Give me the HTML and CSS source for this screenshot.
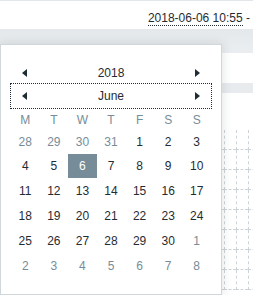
FILE: index.html
```html
<!DOCTYPE html>
<html lang="en">
<head>
  <meta charset="UTF-8" />
  <meta name="viewport" content="width=device-width, initial-scale=1.0" />
  <title>Time filter</title>
  <link rel="stylesheet" href="styles.css">
</head>
<body>
  <div class="header">
    <span class="period"><span class="date-link">2018-06-06 10:55</span> -</span>
  </div>
  <div class="toolbar"></div>
  <div class="filter"></div>
  <div class="table-head"></div>
  <div class="spacer"></div>
  <div class="graph">
    <div class="graph-grid" id="graphGrid"></div>
  </div>

  <div class="calendar">
    <div class="cal-row cal-year">
      <span class="arrow"><svg width="5" height="8" viewBox="0 0 5 8"><polygon points="5,0 5,8 0,4" /></svg></span>
      <span class="cal-title">2018</span>
      <span class="arrow"><svg width="5" height="8" viewBox="0 0 5 8"><polygon points="0,0 0,8 5,4" /></svg></span>
    </div>
    <div class="cal-row cal-month">
      <span class="arrow"><svg width="5" height="8" viewBox="0 0 5 8"><polygon points="5,0 5,8 0,4" /></svg></span>
      <span class="cal-title">June</span>
      <span class="arrow"><svg width="5" height="8" viewBox="0 0 5 8"><polygon points="0,0 0,8 5,4" /></svg></span>
    </div>
    <div class="cal-weekdays">
      <span>M</span><span>T</span><span>W</span><span>T</span><span>F</span><span>S</span><span>S</span>
    </div>
    <div class="cal-days" id="calDays"></div>
  </div>

  <script>
    const days = document.getElementById('calDays');
    const cells = [];
    [28, 29, 30, 31].forEach(d => cells.push({ d: d, muted: true }));
    for (let d = 1; d <= 30; d++) cells.push({ d: d, muted: false });
    for (let d = 1; d <= 8; d++) cells.push({ d: d, muted: true });

    cells.forEach(c => {
      const cell = document.createElement('span');
      cell.className = 'day';
      if (c.muted) cell.classList.add('muted');
      if (!c.muted && c.d === 6) cell.classList.add('selected');
      cell.innerText = c.d;
      days.appendChild(cell);
    });

    const grid = document.getElementById('graphGrid');
    for (let i = 0; i < 8 * 4; i++) {
      grid.appendChild(document.createElement('div'));
    }
  </script>
</body>
</html>
```

FILE: styles.css
```css
body {
  font-family: 'Liberation Sans', Arial, sans-serif;
  font-size: 12px;
  line-height: 14px;
  color: #1f2c33;
  background: #ffffff;
  margin: 0;
  padding: 0;
  overflow: hidden;
  position: relative;
  height: 295px;
}
.header {
  height: 28px;
  border-top: 1px solid #e2e6e8;
  display: flex;
  justify-content: flex-end;
  padding-right: 3px;
}
.period {
  margin-top: 10px;
  white-space: nowrap;
}
.date-link {
  border-bottom: 1px dotted #1f2c33;
}
.toolbar {
  height: 24px;
  background: linear-gradient(to bottom, #e4e8ea, #ebeef0);
}
.filter {
  height: 30px;
}
.table-head {
  height: 10px;
  background: #e8ebed;
}
.spacer {
  height: 37px;
}
.graph {
  display: flex;
  padding-left: 212px;
}
.graph-grid {
  display: grid;
  grid-template-columns: repeat(4, 12px);
  grid-auto-rows: 20px;
}
.graph-grid div {
  border-left: 1px dashed #cdd4d8;
  border-bottom: 1px dashed #cdd4d8;
  box-sizing: border-box;
}

.calendar {
  position: absolute;
  left: 0;
  top: 44px;
  width: 202px;
  height: 249px;
  padding: 0 9px;
  background: #ffffff;
  border: 1px solid #cfd7db;
  box-shadow: 0 0 10px rgba(31, 44, 51, 0.15);
}
.cal-row {
  display: flex;
  align-items: center;
  justify-content: space-between;
  padding: 0 12px;
}
.cal-year {
  margin-top: 21px;
  height: 14px;
}
.cal-month {
  margin-top: 3px;
  padding-top: 5px;
  padding-bottom: 5px;
  border: 1px dotted #1f2c33;
  padding-left: 11px;
  padding-right: 11px;
}
.arrow {
  display: flex;
  width: 5px;
  height: 14px;
  align-items: center;
}
.arrow svg {
  fill: #1f2c33;
  margin-top: -1px;
}
.cal-weekdays,
.cal-days {
  display: grid;
  grid-template-columns: repeat(7, 1fr);
  margin: 0 1px;
  text-align: center;
}
.cal-weekdays {
  color: #768d99;
  padding-top: 2px;
  line-height: 18px;
}
.cal-days {
  grid-auto-rows: 24px;
  row-gap: 0.8px;
  line-height: 24px;
  margin-top: 0.6px;
}
.day.muted {
  color: #768d99;
}
.day.selected {
  background-color: #768d99;
  color: #ffffff;
}
```
